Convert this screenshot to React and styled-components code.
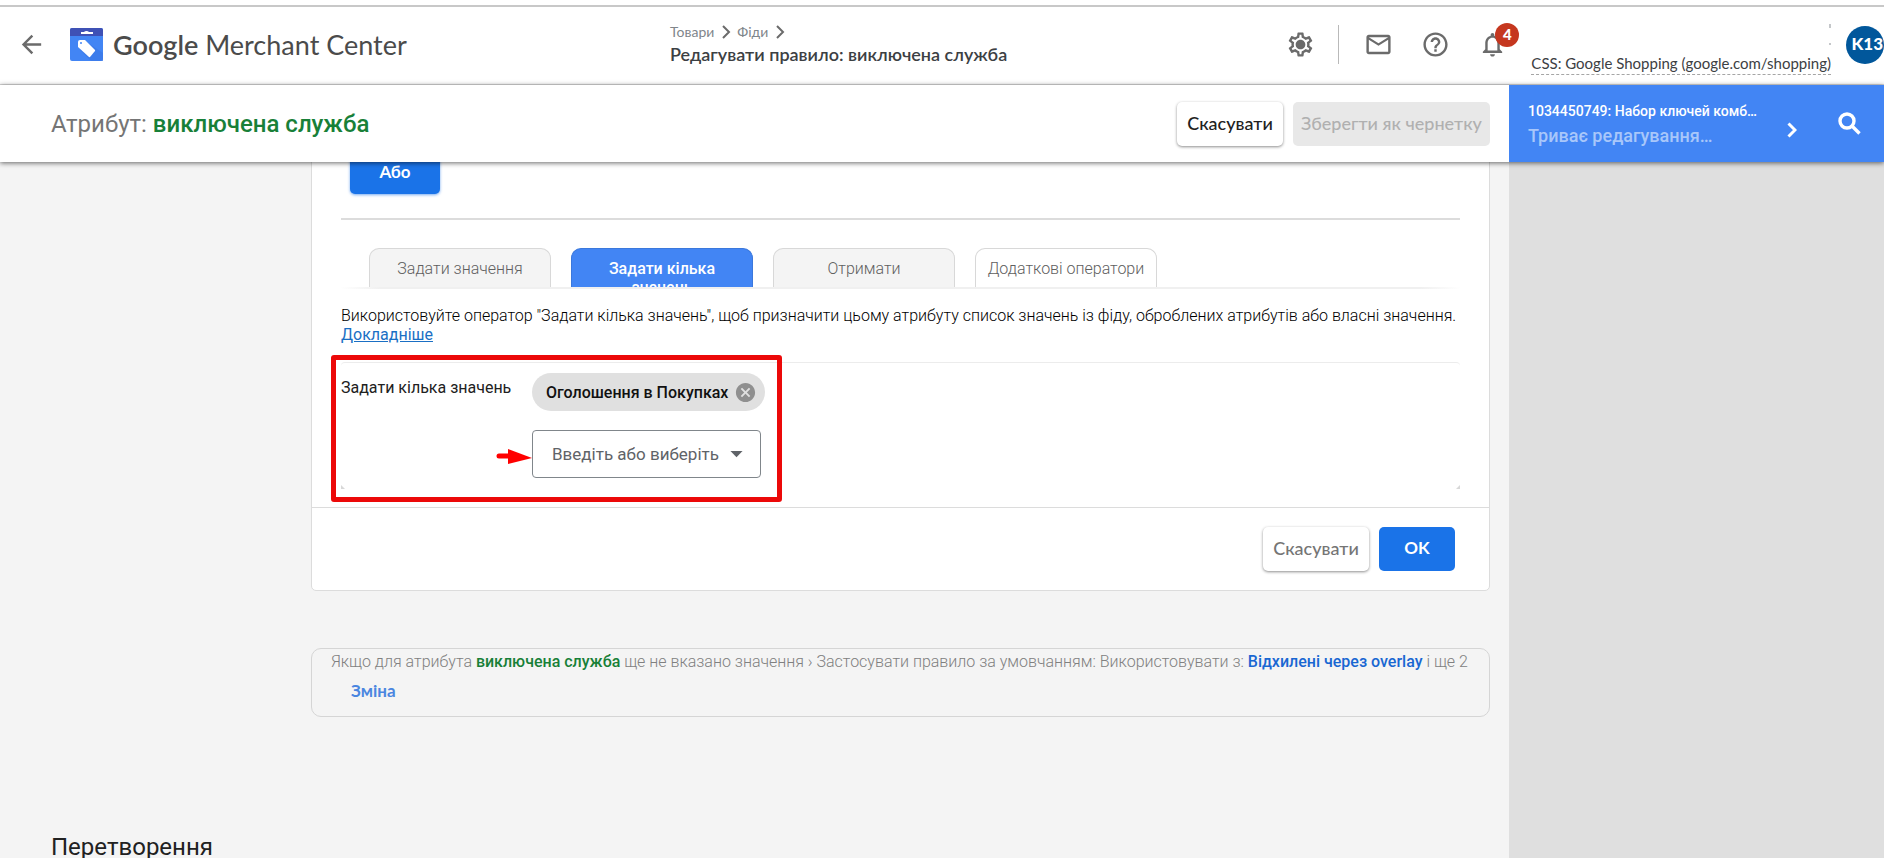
import React from 'react';
import styled, { createGlobalStyle } from 'styled-components';
import {
  MdArrowBack,
  MdMailOutline,
  MdHelpOutline,
  MdNotificationsNone,
  MdOutlineSettings,
  MdCancel,
  MdArrowDropDown,
} from 'react-icons/md';

const brandFont = 'Lato, "Open Sans", sans-serif';
const bodyFont = 'Roboto, "Noto Sans", sans-serif';

const GlobalStyle = createGlobalStyle`
  * { box-sizing: border-box; }
  body { margin: 0; background: #f4f4f4; font-family: ${bodyFont}; color: #212121; }
  button, select { font: inherit; }
  a { color: inherit; text-decoration: none; }
  svg { display: block; flex: none; }
`;

const Page = styled.div`
  display: flex;
  flex-direction: column;
  height: 100vh;
  overflow: hidden;
`;

const TopBar = styled.header`
  display: grid;
  grid-template-columns: 670px 1fr auto;
  margin-top: 5px;
  border-top: 2px solid #c8c8c8;
  border-bottom: 1px solid #dadada;
  height: 80px;
  background: #fff;
  flex: none;
  box-shadow: 0 -5px 0 #fff;
`;

const Brand = styled.div`
  display: flex;
  align-items: center;
  padding: 0 0 3px 17px;
`;

const IconButton = styled.button`
  position: relative;
  display: flex;
  padding: 0;
  border: 0;
  background: none;
  color: ${(p) => p.$color || '#6b6b6b'};
  cursor: pointer;
`;

const LogoMark = styled.svg`
  margin: 0 10px 0 24px;
`;

const Wordmark = styled.span`
  padding-top: 2px;
  font: 400 27px/36px ${brandFont};
  color: #4b4b4b;
  white-space: nowrap;
  b { font-weight: 600; }
`;

const Heading = styled.div`
  display: flex;
  flex-direction: column;
  padding-top: 15px;
`;

const Crumbs = styled.nav`
  display: flex;
  align-items: center;
  gap: 2px;
  font: 400 14px/20px ${brandFont};
  color: #80868b;
`;

const PageTitle = styled.h1`
  margin: 0;
  font: 600 18px/24px ${brandFont};
  color: #3c4043;
`;

const Tools = styled.div`
  display: flex;
  align-items: center;
  padding-bottom: 2px;
`;

const ToolIcons = styled.div`
  display: flex;
  align-items: center;
  gap: 28px;
`;

const Divider = styled.span`
  width: 1px;
  height: 39px;
  margin: 0 25px 0 23px;
  background: #b9b9b9;
`;

const Badge = styled.span`
  position: absolute;
  top: -7px;
  right: -12px;
  width: 24px;
  height: 24px;
  border-radius: 50%;
  background: #c5371f;
  color: #fff;
  font: 900 15px/22px ${brandFont};
  text-align: center;
`;

const Account = styled.div`
  display: flex;
  flex-direction: column;
  align-items: flex-end;
  align-self: stretch;
  padding-top: 17px;
  margin-left: 24px;
`;

const CssLink = styled.a`
  margin-top: 6px;
  border-bottom: 1px dashed #a5a5a5;
  font: 400 15px/22px ${brandFont};
  color: #3c4043;
`;

const Avatar = styled.span`
  width: 38px;
  height: 38px;
  margin-left: 15px;
  border-radius: 50%;
  background: #01579b;
  color: #fff;
  font: 900 17px/36px ${brandFont};
  text-align: right;
  padding-right: 1px;
  overflow: hidden;
`;

const AttributeBar = styled.section`
  position: relative;
  z-index: 1;
  display: flex;
  align-items: center;
  height: 77px;
  flex: none;
  background: #fff;
  box-shadow: 0 1px 5px rgba(0, 0, 0, 0.6);
`;

const Attribute = styled.h2`
  flex: 1;
  margin: 0;
  padding-left: 51px;
  font: 400 24px/32px ${bodyFont};
  color: #757575;
  b { font-weight: 500; color: #188038; }
`;

const Button = styled.button`
  width: ${(p) => p.$width}px;
  height: 44px;
  padding: 0 0 2px;
  border: 0;
  border-radius: 5px;
  background: #fff;
  color: ${(p) => (p.$muted ? '#757575' : '#212121')};
  font: 500 18px/24px ${brandFont};
  white-space: nowrap;
  box-shadow: 0 1px 3px rgba(0, 0, 0, 0.45);
  cursor: pointer;
`;

const PrimaryButton = styled(Button)`
  background: #1a73e8;
  color: #fff;
  font-size: 17px;
  font-weight: 700;
  box-shadow: none;
`;

const DraftButton = styled(Button)`
  background: #e8e8e8;
  color: #b0b0b0;
  box-shadow: none;
`;

const Actions = styled.div`
  display: flex;
  gap: 10px;
  padding-right: ${(p) => p.$end}px;
`;

const ProductPicker = styled.div`
  display: flex;
  align-items: center;
  width: 375px;
  height: 100%;
  padding: 0 23px 0 19px;
  background: #4285f4;
  color: #fff;
`;

const ProductText = styled.div`
  flex: 1;
  min-width: 0;
`;

const ProductName = styled.div`
  font: 500 14px/24px ${bodyFont};
`;

const ProductState = styled.div`
  font: 500 18px/26px ${bodyFont};
  color: #a8c7fa;
`;

const Chevron = styled.svg`
  margin: 13px 41px 0 0;
`;

const Body = styled.div`
  display: flex;
  flex: 1;
  min-height: 0;
`;

const Content = styled.main`
  flex: 1;
  min-width: 0;
  overflow: hidden;
`;

const Scrolled = styled.div`
  margin-top: -32px;
`;

const SidePane = styled.aside`
  width: 375px;
  background: #dfdfdf;
`;

const Card = styled.section`
  margin: 0 19px 0 311px;
  border: 1px solid #dcdcdc;
  border-radius: 5px;
  background: #fff;
`;

const CardBody = styled.div`
  padding: 19px 29px 18px;
`;

const OrButton = styled(PrimaryButton)`
  display: block;
  margin-left: 9px;
  padding: 0;
  box-shadow: 0 1px 3px rgba(26, 115, 232, 0.6);
`;

const Rule = styled.hr`
  height: 2px;
  margin: 24px 0 28px;
  border: 0;
  background: #dcdcdc;
`;

const Tabs = styled.div`
  display: flex;
  gap: 20px;
  height: 41px;
  padding: 0 28px;
  border-bottom: 2px solid;
  border-image: linear-gradient(to right, #fff, #f0f0f0 40px, #f0f0f0 calc(100% - 40px), #fff) 1;
`;

const Tab = styled.button`
  width: 182px;
  height: 39px;
  padding: 10px 10px 0;
  border: 1px solid ${(p) => (p.$active ? '#3b78dc' : '#d8d8d8')};
  border-bottom: 0;
  border-radius: 10px 10px 0 0;
  background: ${(p) => (p.$active ? '#4285f4' : p.$plain ? '#fff' : '#f4f4f4')};
  color: ${(p) => (p.$active ? '#fff' : '#606060')};
  font: ${(p) => (p.$active ? 500 : 300)} 16px/19px ${bodyFont};
  white-space: ${(p) => (p.$plain ? 'nowrap' : 'normal')};
  overflow: hidden;
  cursor: pointer;
  span { display: block; height: 28px; overflow: hidden; }
`;

const Hint = styled.p`
  margin: 17px 0 18px;
  font: 300 16px/19px ${bodyFont};
  color: #000;
  a { display: table; font-weight: 400; color: #1a6fc4; text-decoration: underline; }
`;

const ValueBox = styled.div`
  position: relative;
  display: flex;
  height: 127px;
  padding-top: 10px;
  border-top: 1px solid #ececec;
  border-radius: 4px;
`;

const ValueLabel = styled.label`
  width: 191px;
  padding-top: 5px;
  font: 400 16px/19px ${bodyFont};
`;

const ValueColumn = styled.div`
  display: flex;
  flex-direction: column;
  align-items: flex-start;
  gap: 19px;
`;

const Chip = styled.span`
  display: flex;
  align-items: center;
  gap: 6px;
  height: 38px;
  padding: 0 8px 0 14px;
  border-radius: 19px;
  background: #e0e0e0;
  font: 500 16px/19px ${bodyFont};
  color: #111;
`;

const SelectWrap = styled.span`
  position: relative;
  display: block;
  width: 229px;
  > svg { position: absolute; right: 10px; top: 9px; color: #5f6368; pointer-events: none; }
`;

const Select = styled.select`
  appearance: none;
  width: 100%;
  height: 48px;
  padding: 0 0 0 19px;
  border: 1px solid #80868b;
  border-radius: 4px;
  background: #fff;
  color: #5f6368;
  font: 400 17px/24px ${bodyFont};
`;

const Highlight = styled.span`
  position: absolute;
  left: -10px;
  top: -8px;
  width: 451px;
  height: 147px;
  border: 5px solid #ec0909;
  border-radius: 3px;
  pointer-events: none;
`;

const Pointer = styled.svg`
  position: absolute;
  left: 155px;
  top: 86px;
`;

const Corners = styled.svg`
  position: absolute;
  bottom: 0;
  ${(p) => (p.$right ? 'right: 0;' : 'left: 0; transform: scaleX(-1);')}
`;

const CardFooter = styled.footer`
  display: flex;
  justify-content: flex-end;
  height: 83px;
  padding-top: 19px;
  border-top: 1px solid #dcdcdc;
`;

const DefaultRule = styled.section`
  height: 69px;
  margin: 57px 19px 0 311px;
  padding: 3px 19px;
  border: 1px solid #d5d5d5;
  border-radius: 10px;
`;

const RuleText = styled.p`
  margin: 0;
  font: 300 16px/20px ${bodyFont};
  color: #808080;
  white-space: nowrap;
  b { font-weight: 500; color: #188038; }
  a { font-weight: 500; color: #1967d2; }
`;

const ChangeButton = styled.button`
  display: block;
  margin: 7px 0 0 20px;
  padding: 0;
  border: 0;
  background: none;
  color: #4a86e0;
  font: 700 17px/24px ${brandFont};
  cursor: pointer;
`;

const SectionTitle = styled.h2`
  margin: 114px 0 0 51px;
  font: 400 24px/32px ${bodyFont};
  color: #212121;
`;

function Logo() {
  return (
    <LogoMark width="33" height="33" viewBox="0 0 33 33" aria-hidden="true">
      <rect width="33" height="33" rx="2" fill="#4285f4" />
      <path d="M0 8V2a2 2 0 0 1 2-2h29a2 2 0 0 1 2 2v6z" fill="#3f51b5" />
      <path d="M11 4h3a3 2 0 0 1 5 0h4v2H11z" fill="#fff" />
      <path d="m15 13 18 12v8H21L10 22z" fill="#3b78e7" opacity=".7" />
      <path d="M8 14a2 2 0 0 1 2-2h5l10 10a1 1 0 0 1 0 1l-5 6a1 1 0 0 1-1 0L8 19z" fill="#fff" />
      <circle cx="11" cy="15" r="1" fill="#4285f4" />
    </LogoMark>
  );
}

function GearIcon() {
  return (
    <svg width="29" height="29" viewBox="0 0 24 24" aria-hidden="true">
      <MdOutlineSettings size={24} />
      <circle cx="12" cy="12" r="3.4" fill="currentColor" />
    </svg>
  );
}

function SearchIcon() {
  return (
    <svg width="23" height="23" viewBox="0 0 23 23" aria-hidden="true">
      <g fill="none" stroke="currentColor" strokeWidth="3.4">
        <circle cx="9" cy="9" r="7" />
        <path d="m14 14 7.500 7.500" />
      </g>
    </svg>
  );
}

function CornerMark(props) {
  return (
    <Corners width="4" height="4" viewBox="0 0 4 4" aria-hidden="true" {...props}>
      <path d="M4 0v4H0z" fill="#d8d8d8" />
    </Corners>
  );
}

function CrumbArrow() {
  return (
    <svg width="19" height="14" viewBox="0 0 19 14" aria-hidden="true">
      <path d="m7 1 6 6-6 6" fill="none" stroke="#6b6b6b" strokeWidth="2" />
    </svg>
  );
}

export default function App() {
  return (
    <Page>
      <GlobalStyle />
      <TopBar>
        <Brand>
          <IconButton aria-label="Назад">
            <MdArrowBack size={29} />
          </IconButton>
          <Logo />
          <Wordmark>
            <b>Google</b> Merchant Center
          </Wordmark>
        </Brand>
        <Heading>
          <Crumbs>
            <a href="#products">Товари</a>
            <CrumbArrow />
            <a href="#feeds">Фіди</a>
            <CrumbArrow />
          </Crumbs>
          <PageTitle>Редагувати правило: виключена служба</PageTitle>
        </Heading>
        <Tools>
          <IconButton aria-label="Налаштування">
            <GearIcon />
          </IconButton>
          <Divider />
          <ToolIcons>
            <IconButton aria-label="Пошта">
              <MdMailOutline size={29} />
            </IconButton>
            <IconButton aria-label="Довідка">
              <MdHelpOutline size={29} />
            </IconButton>
            <IconButton aria-label="Сповіщення">
              <MdNotificationsNone size={29} />
              <Badge>4</Badge>
            </IconButton>
          </ToolIcons>
          <Account>
            <svg width="2" height="22" viewBox="0 0 2 22" aria-hidden="true">
              <path d="M1 0v4M1 19v2" stroke="#8a8f94" strokeWidth="1" />
            </svg>
            <CssLink href="#css">CSS: Google Shopping (google.com/shopping)</CssLink>
          </Account>
          <Avatar>K13</Avatar>
        </Tools>
      </TopBar>
      <AttributeBar>
        <Attribute>
          Атрибут: <b>виключена служба</b>
        </Attribute>
        <Actions $end={19}>
          <Button $width={106}>Скасувати</Button>
          <DraftButton $width={197} disabled>
            Зберегти як чернетку
          </DraftButton>
        </Actions>
        <ProductPicker>
          <ProductText>
            <ProductName>1034450749: Набор ключей комб…</ProductName>
            <ProductState>Триває редагування…</ProductState>
          </ProductText>
          <Chevron width="10" height="16" viewBox="0 0 10 16" aria-hidden="true">
            <path d="m1.500 1.500 6.500 6.500-6.500 6.500" fill="none" stroke="currentColor" strokeWidth="3" />
          </Chevron>
          <IconButton $color="#fff" aria-label="Пошук">
            <SearchIcon />
          </IconButton>
        </ProductPicker>
      </AttributeBar>
      <Body>
        <Content>
          <Scrolled>
            <Card>
              <CardBody>
                <OrButton $width={90}>Або</OrButton>
                <Rule />
                <Tabs>
                  <Tab><span>Задати значення</span></Tab>
                  <Tab $active><span>Задати кілька значень</span></Tab>
                  <Tab><span>Отримати</span></Tab>
                  <Tab $plain><span>Додаткові оператори</span></Tab>
                </Tabs>
                <Hint>
                  Використовуйте оператор "Задати кілька значень", щоб призначити цьому атрибуту список
                  значень із фіду, оброблених атрибутів або власні значення.
                  <a href="#more">Докладніше</a>
                </Hint>
                <ValueBox>
                  <ValueLabel htmlFor="values">Задати кілька значень</ValueLabel>
                  <ValueColumn>
                    <Chip>
                      Оголошення в Покупках
                      <IconButton $color="#8f8f8f" aria-label="Вилучити">
                        <MdCancel size={23} />
                      </IconButton>
                    </Chip>
                    <SelectWrap>
                      <Select id="values">
                        <option>Введіть або виберіть</option>
                      </Select>
                      <MdArrowDropDown size={29} />
                    </SelectWrap>
                  </ValueColumn>
                  <CornerMark />
                  <CornerMark $right />
                  <Highlight />
                  <Pointer width="37" height="16" viewBox="0 0 37 16" aria-hidden="true">
                    <path d="M3 7h12" stroke="#f00" strokeWidth="5" strokeLinecap="round" />
                    <path d="m12 0 24 9-24 6z" fill="#f00" />
                  </Pointer>
                </ValueBox>
              </CardBody>
              <CardFooter>
                <Actions $end={34}>
                  <Button $width={106} $muted>
                    Скасувати
                  </Button>
                  <PrimaryButton $width={76}>OK</PrimaryButton>
                </Actions>
              </CardFooter>
            </Card>
            <DefaultRule>
              <RuleText>
                Якщо для атрибута <b>виключена служба</b> ще не вказано значення › Застосувати правило за
                умовчанням: Використовувати з: <a href="#overlay">Відхилені через overlay</a> і ще 2
              </RuleText>
              <ChangeButton>Зміна</ChangeButton>
            </DefaultRule>
            <SectionTitle>Перетворення</SectionTitle>
          </Scrolled>
        </Content>
        <SidePane />
      </Body>
    </Page>
  );
}
